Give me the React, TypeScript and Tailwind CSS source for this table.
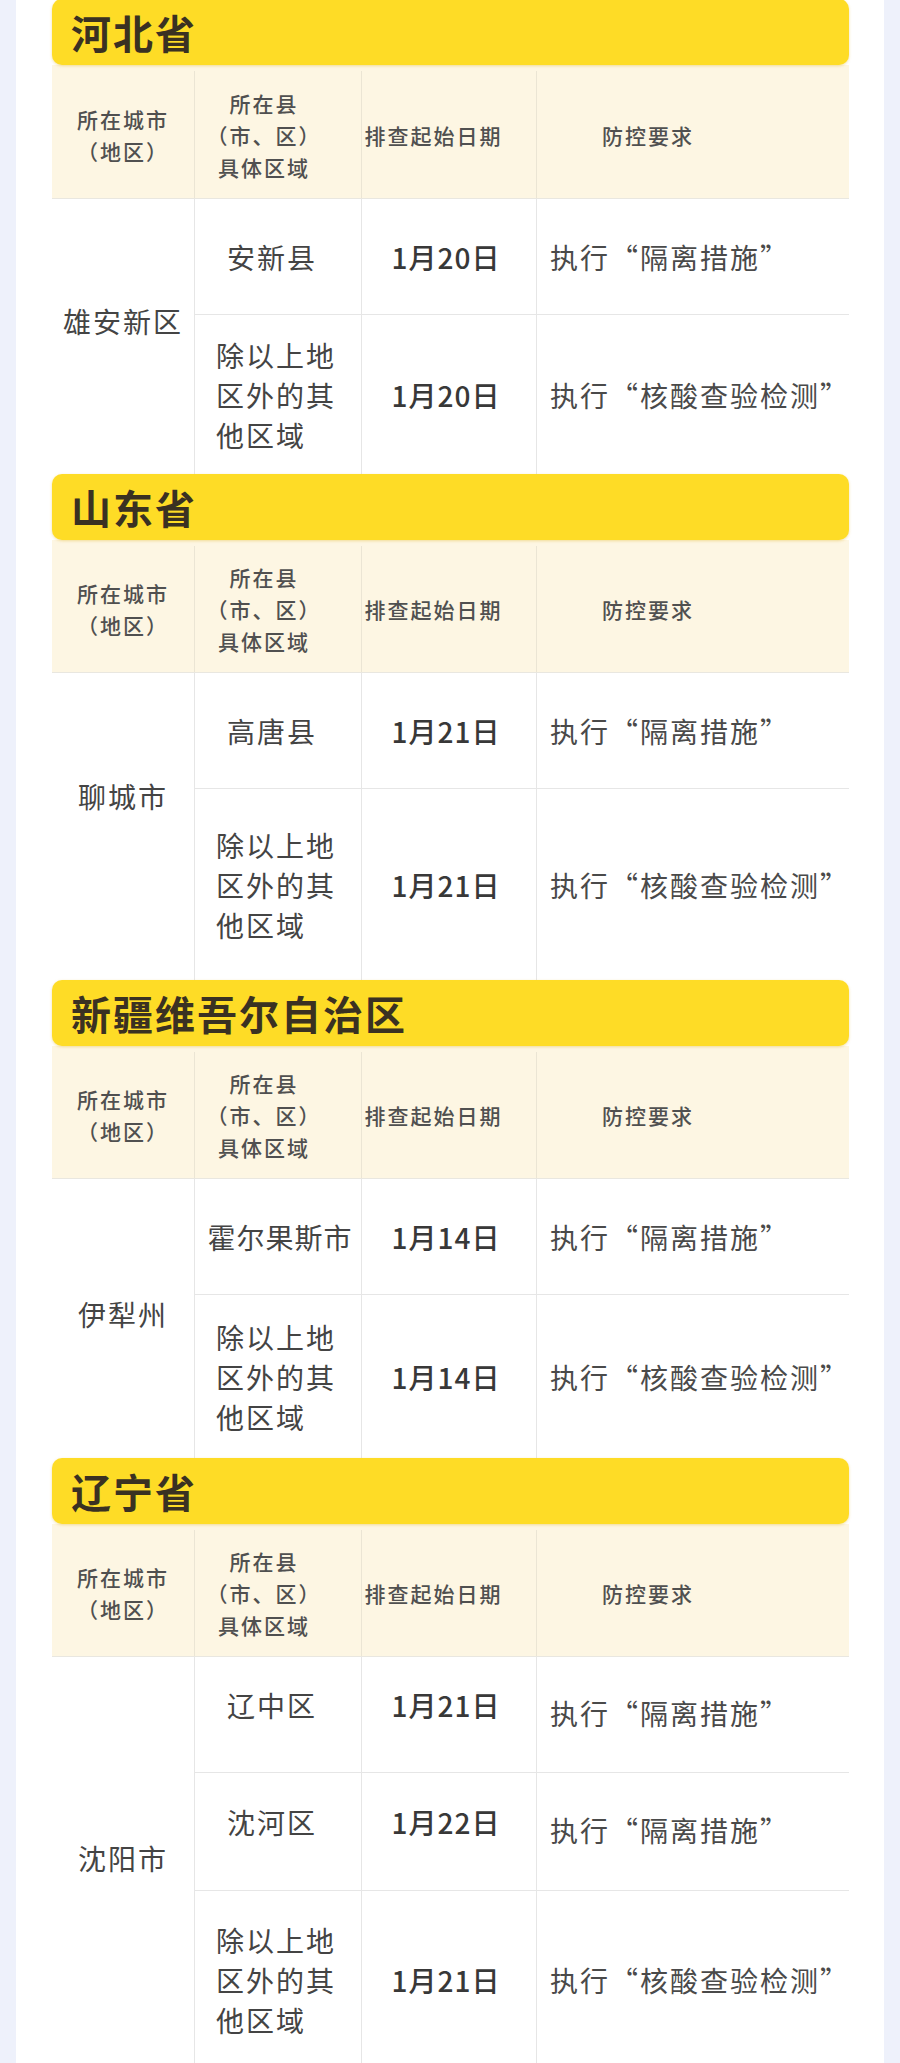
import React from "react";

type Row = {
  area: string[];
  date: string;
  req: string;
  h: string;
  pad?: string;
};

type Section = {
  province: string;
  city: string;
  cityPad: string;
  headH: string;
  rows: Row[];
};

const OTHER = ["除以上地", "区外的其", "他区域"];

const sections: Section[] = [
  {
    province: "河北省",
    city: "雄安新区",
    cityPad: "pb-[32px]",
    headH: "h-[134px]",
    rows: [
      { area: ["安新县"], date: "1月20日", req: "执行“隔离措施”", h: "h-[116px]" },
      { area: OTHER, date: "1月20日", req: "执行“核酸查验检测”", h: "h-[159px]" },
    ],
  },
  {
    province: "山东省",
    city: "聊城市",
    cityPad: "pb-[62px]",
    headH: "h-[133px]",
    rows: [
      { area: ["高唐县"], date: "1月21日", req: "执行“隔离措施”", h: "h-[116px]" },
      { area: OTHER, date: "1月21日", req: "执行“核酸查验检测”", h: "h-[191px]" },
    ],
  },
  {
    province: "新疆维吾尔自治区",
    city: "伊犁州",
    cityPad: "pb-[10px]",
    headH: "h-[133px]",
    rows: [
      { area: ["霍尔果斯市"], date: "1月14日", req: "执行“隔离措施”", h: "h-[116px]" },
      { area: OTHER, date: "1月14日", req: "执行“核酸查验检测”", h: "h-[163px]" },
    ],
  },
  {
    province: "辽宁省",
    city: "沈阳市",
    cityPad: "pb-[10px]",
    headH: "h-[133px]",
    rows: [
      { area: ["辽中区"], date: "1月21日", req: "执行“隔离措施”", h: "h-[116px]", pad: "pb-[20px]" },
      { area: ["沈河区"], date: "1月22日", req: "执行“隔离措施”", h: "h-[118px]", pad: "pb-[20px]" },
      { area: OTHER, date: "1月21日", req: "执行“核酸查验检测”", h: "h-[178px]" },
    ],
  },
];

function AreaCell({ area, pad }: { area: string[]; pad?: string }) {
  if (area.length === 1) {
    const long = area[0].length > 4;
    return (
      <div
        className={`flex w-[167px] items-center justify-center border-r border-[#e6e6e6] text-center ${long ? "pl-[4px] tracking-[1px]" : "pr-[12px]"} ${pad ?? ""}`}
      >
        {area[0]}
      </div>
    );
  }
  return (
    <div className="flex w-[167px] items-center justify-center border-r border-[#e6e6e6]">
      <div className="w-[124px] text-left leading-[40px]">
        {area.map((line) => (
          <div key={line}>{line}</div>
        ))}
      </div>
    </div>
  );
}

function ProvinceTable({ s, first }: { s: Section; first: boolean }) {
  return (
    <section className={first ? "-mt-px" : ""}>
      <div className="relative z-10 flex h-[66px] items-center rounded-[10px] bg-[#fedc26] pl-[19px] text-[40px] font-bold tracking-[2px] text-[#3a3122] shadow-[0_1px_3px_rgba(220,170,0,0.35)]">
        {s.province}
      </div>
      <div
        className={`flex ${s.headH} border-b border-[#e9e7e0] bg-[#fdf6e3] pt-[6px] text-[21px] font-medium leading-[32px] tracking-[2px] text-[#505050]`}
      >
        <div className="flex w-[143px] items-center justify-center border-r border-[#ebe5d4] text-center">
          <div>
            所在城市
            <br />
            （地区）
          </div>
        </div>
        <div className="flex w-[167px] items-center justify-center border-r border-[#ebe5d4] pr-[28px] text-center">
          <div>
            所在县
            <br />
            （市、区）
            <br />
            具体区域
          </div>
        </div>
        <div className="flex w-[175px] items-center justify-center border-r border-[#ebe5d4] pr-[31px] text-center">
          排查起始日期
        </div>
        <div className="flex flex-1 items-center pl-[65px]">防控要求</div>
      </div>
      <div className="flex text-[28px] tracking-[2px] text-[#444]">
        <div
          className={`flex w-[143px] items-center justify-center border-r border-[#e6e6e6] text-center ${s.cityPad}`}
        >
          {s.city}
        </div>
        <div className="flex flex-1 flex-col">
          {s.rows.map((r, i) => (
            <div
              key={i}
              className={`flex ${r.h} ${i < s.rows.length - 1 ? "border-b border-[#e6e6e6]" : ""}`}
            >
              <AreaCell area={r.area} pad={r.pad} />
              <div
                className={`flex w-[175px] items-center justify-center border-r border-[#e6e6e6] pr-[6px] font-medium tracking-[1px] text-[#383838] ${r.pad ?? ""}`}
              >
                {r.date}
              </div>
              <div className={`flex flex-1 items-center pl-[13px] text-[#4a4a4a] ${r.pad ? "pb-[4px]" : ""}`}>
                {r.req}
              </div>
            </div>
          ))}
        </div>
      </div>
    </section>
  );
}

export default function App() {
  return (
    <div
      lang="zh-CN"
      className="min-h-[2063px] bg-[#eef1fb] px-[16px]"
      style={{ fontFamily: '"Noto Sans CJK SC", "Noto Sans", sans-serif' }}
    >
      <div className="min-h-[2063px] bg-white px-[36px] pr-[35px]">
        {sections.map((s, i) => (
          <ProvinceTable key={s.province} s={s} first={i === 0} />
        ))}
      </div>
    </div>
  );
}
